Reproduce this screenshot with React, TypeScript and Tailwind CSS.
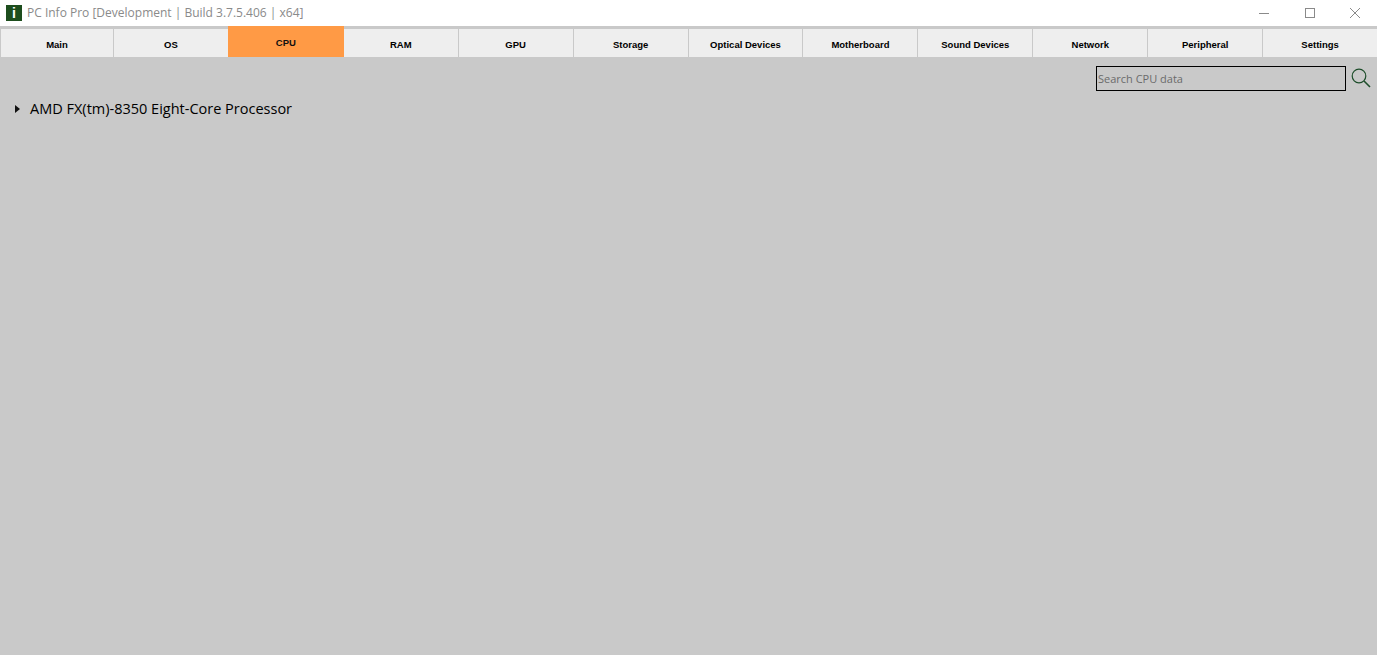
const tabs = ['Main', 'OS', 'CPU', 'RAM', 'GPU', 'Storage', 'Optical Devices', 'Motherboard', 'Sound Devices', 'Network', 'Peripheral', 'Settings']

export default function App() {
  return (
    <div className="h-[655px] w-[1377px] overflow-hidden bg-[#c9c9c9] font-['Open_Sans','Noto_Sans',sans-serif]">
      {/* Title bar */}
      <div className="flex h-[26px] items-center bg-white">
        <div className="ml-[6px] flex h-[16px] w-[16px] items-center justify-center bg-[#1d4d1d] font-['Liberation_Sans',sans-serif] text-[14px] leading-none font-bold text-white">
          i
        </div>
        <span className="ml-[5px] text-[12px] text-[#8a8a8a]">PC Info Pro [Development | Build 3.7.5.406 | x64]</span>
        <div className="ml-auto flex items-center">
          <svg width="12" height="12" viewBox="0 0 12 12" className="mr-[34px]">
            <path d="M1 6.5H11" stroke="#8a8a8a" strokeWidth="1" />
          </svg>
          <svg width="12" height="12" viewBox="0 0 12 12" className="mr-[33px]">
            <rect x="1.5" y="1.5" width="9" height="9" fill="none" stroke="#8a8a8a" strokeWidth="1" />
          </svg>
          <svg width="12" height="12" viewBox="0 0 12 12" className="mr-[16px]">
            <path d="M1 1L11 11M11 1L1 11" stroke="#8a8a8a" strokeWidth="1" />
          </svg>
        </div>
      </div>

      {/* Tabs */}
      <div className="flex h-[31px] items-end gap-px pl-px">
        {tabs.map((tab, i) => (
          <div
            key={tab}
            className={
              tab === 'CPU'
                ? "-mx-px flex h-[31px] w-[116px] items-start justify-center bg-[#ff9a45] pt-[10px] font-['Liberation_Sans',sans-serif] text-[9.5px] leading-[14px] font-bold text-[#111]"
                : i === 0
                  ? "flex h-[28px] w-[112px] items-start justify-center bg-[#eeeeee] pt-[9px] font-['Liberation_Sans',sans-serif] text-[9.5px] leading-[14px] font-bold text-black"
                  : "flex h-[28px] w-[114px] items-start justify-center bg-[#eeeeee] pt-[9px] font-['Liberation_Sans',sans-serif] text-[9.5px] leading-[14px] font-bold text-black"
            }
          >
            {tab}
          </div>
        ))}
      </div>

      {/* Search */}
      <div className="mt-[9px] flex justify-end pr-[6px]">
        <input
          readOnly
          placeholder="Search CPU data"
          className="h-[25px] w-[250px] border border-black bg-transparent px-[1px] text-[11px] outline-none placeholder:text-[#6b6b6b]"
        />
        <svg width="20" height="20" viewBox="0 0 20 20" className="mt-[2px] ml-[5px]">
          <circle cx="8" cy="8" r="6.8" fill="none" stroke="#1d4d2a" strokeWidth="1.2" />
          <path d="M13 13L19 19" stroke="#1d4d2a" strokeWidth="1.6" />
        </svg>
      </div>

      {/* CPU list */}
      <div className="mt-[6px] flex h-[24px] items-center pl-[15px]">
        <svg width="5" height="8" viewBox="0 0 5 8">
          <path d="M0 0L5 4L0 8Z" fill="#111" />
        </svg>
        <span className="ml-[10px] text-[14.5px] text-black">AMD FX(tm)-8350 Eight-Core Processor</span>
      </div>
    </div>
  )
}
